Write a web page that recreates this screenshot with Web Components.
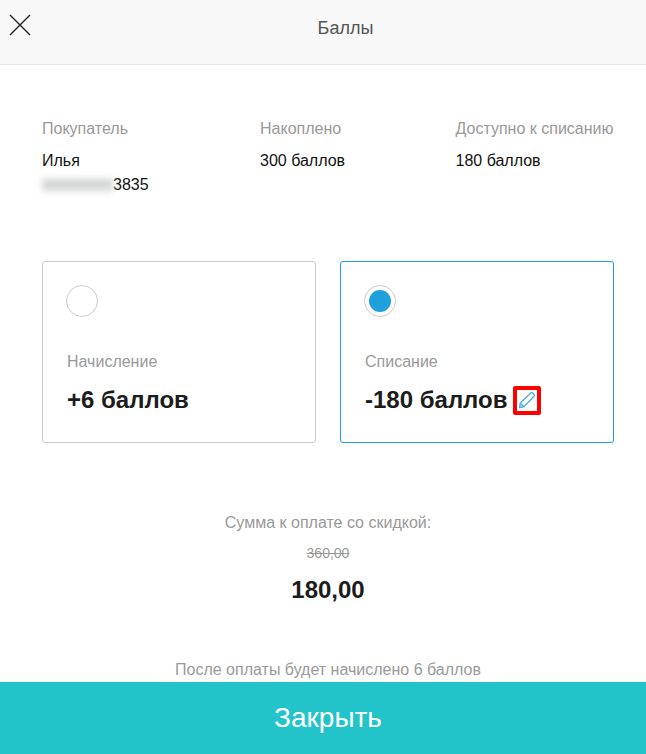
<!DOCTYPE html>
<html lang="ru">
<head>
<meta charset="utf-8">
<title>Баллы</title>
<style>
html, body { margin: 0; height: 100%; }
body { font-family: "Liberation Sans", Arial, sans-serif; background: #fff; overflow: hidden; }
</style>
</head>
<body>
<points-page></points-page>
<script>
class TopBar extends HTMLElement {
    constructor() {
        super();
        this.attachShadow({ mode: 'open' });
        this.shadowRoot.innerHTML = `
        <style>
        :host { display: flex; flex: none; align-items: center; justify-content: center; position: relative; box-sizing: border-box; height: 65px; padding: 0 0 8px 45px; background: #f8f8f8; border-bottom: 1px solid #e4e4e4; color: #555; font-size: 18px; }
        svg { position: absolute; left: 9px; top: 14px; }
        </style>
        <svg width="22" height="22" viewBox="0 0 22 22" fill="none" stroke="#222" stroke-width="1.4"><path d="M1 1 L21 21 M21 1 L1 21"/></svg>
        <slot></slot>
        `;
    }
}
customElements.define('top-bar', TopBar);

class InfoCol extends HTMLElement {
    constructor() {
        super();
        this.attachShadow({ mode: 'open' });
        this.shadowRoot.innerHTML = `
        <style>
        :host { display: block; font-size: 16px; line-height: 24px; color: #111; }
        .label { color: #999; margin-bottom: 8px; white-space: nowrap; }
        </style>
        <div class="label"></div>
        <slot></slot>
        `;
    }
    connectedCallback() {
        this.shadowRoot.querySelector('.label').textContent = this.getAttribute('label');
    }
}
customElements.define('info-col', InfoCol);

class PointsCard extends HTMLElement {
    constructor() {
        super();
        this.attachShadow({ mode: 'open' });
        this.shadowRoot.innerHTML = `
        <style>
        :host { display: block; box-sizing: border-box; height: 182px; padding: 23px 24px 0; border: 1px solid #ccc; border-radius: 3px; }
        :host([selected]) { border-color: #1f9fdb; }
        .radio { box-sizing: border-box; width: 32px; height: 32px; margin-left: -1px; border: 1px solid #ccc; border-radius: 50%; display: flex; align-items: center; justify-content: center; }
        :host([selected]) .radio::after { content: ""; width: 22px; height: 22px; border-radius: 50%; background: #1f9fdb; }
        .label { margin-top: 33px; font-size: 16px; line-height: 24px; color: #999; }
        .value { margin-top: 12px; display: flex; align-items: center; gap: 6px; height: 28px; font-size: 24px; font-weight: bold; color: #1c1c1c; white-space: nowrap; }
        </style>
        <div class="radio"></div>
        <div class="label"></div>
        <div class="value"><span class="amount"></span><slot></slot></div>
        `;
    }
    connectedCallback() {
        this.shadowRoot.querySelector('.label').textContent = this.getAttribute('label');
        this.shadowRoot.querySelector('.amount').textContent = this.getAttribute('amount');
    }
}
customElements.define('points-card', PointsCard);

class EditMark extends HTMLElement {
    constructor() {
        super();
        this.attachShadow({ mode: 'open' });
        this.shadowRoot.innerHTML = `
        <style>
        :host { display: flex; align-items: center; justify-content: center; box-sizing: border-box; width: 28px; height: 29px; border: 4px solid #f00; border-radius: 2px; }
        </style>
        <svg width="18" height="18" viewBox="0 0 18 18" fill="none" stroke="#4fb0e6" stroke-width="1.4" stroke-linejoin="round"><path d="M1.5 16.5 L2.2 12.3 L12.6 1.9 Q13.6 1 14.7 1.9 L16 3.2 Q16.9 4.3 16 5.4 L5.7 15.8 Z M2.2 12.3 L5.7 15.8"/></svg>
        `;
    }
}
customElements.define('edit-mark', EditMark);

class PointsPage extends HTMLElement {
    constructor() {
        super();
        this.attachShadow({ mode: 'open' });
        this.shadowRoot.innerHTML = `
        <style>
        :host { display: flex; flex-direction: column; height: 754px; overflow: hidden; }
        main { flex: 1 1 auto; min-height: 0; overflow: hidden; padding: 0 32px 0 42px; }
        .info { display: grid; grid-template-columns: 218px 195.5px auto; margin-top: 52px; height: 144px; }
        .masked { display: inline-block; width: 71px; height: 15px; vertical-align: -3px; background: linear-gradient(#eeeeee, #c6cbc8 35%, #dcdcdc 60%, #f0f0f0); filter: blur(3px); }
        .cards { display: grid; grid-template-columns: 274px 274px; gap: 24px; }
        .sum { margin-top: 68px; text-align: center; color: #999; font-size: 16px; line-height: 24px; }
        .old { margin-top: 8px; font-size: 14px; line-height: 20px; text-decoration: line-through; }
        .total { margin-top: 11px; font-size: 24px; line-height: 32px; font-weight: bold; color: #1c1c1c; }
        .note { margin-top: 52px; }
        button { flex: none; height: 72px; border: 0; padding: 0 0 0 10px; background: #23c4c9; color: #fff; font: 28px "Liberation Sans", Arial, sans-serif; }
        </style>
        <top-bar>Баллы</top-bar>
        <main>
            <div class="info">
                <info-col label="Покупатель">Илья<br><span class="masked"></span>3835</info-col>
                <info-col label="Накоплено">300 баллов</info-col>
                <info-col label="Доступно к списанию">180 баллов</info-col>
            </div>
            <div class="cards">
                <points-card label="Начисление" amount="+6 баллов"></points-card>
                <points-card selected label="Списание" amount="-180 баллов"><edit-mark></edit-mark></points-card>
            </div>
            <div class="sum">
                <div>Сумма к оплате со скидкой:</div>
                <div class="old">360,00</div>
                <div class="total">180,00</div>
                <div class="note">После оплаты будет начислено 6 баллов</div>
            </div>
        </main>
        <button>Закрыть</button>
        `;
    }
}
customElements.define('points-page', PointsPage);
</script>
</body>
</html>
